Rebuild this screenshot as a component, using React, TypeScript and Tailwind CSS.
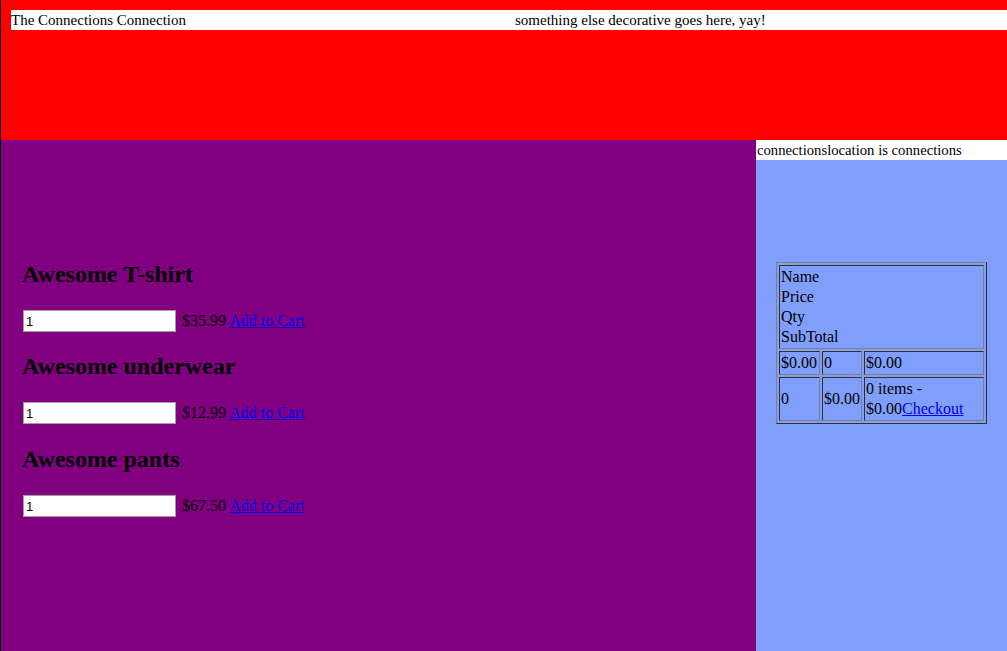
import React from "react";

const products = [
  { name: "Awesome T-shirt", price: "$35.99", gap: "" },
  { name: "Awesome underwear", price: "$12.99", gap: "mt-[19px]" },
  { name: "Awesome pants", price: "$67.50", gap: "mt-[20px]" },
];

const cell =
  "border border-t-[#303030] border-l-[#303030] border-b-[#808080] border-r-[#808080] p-[1px] align-middle text-left font-normal";

export default function App() {
  return (
    <div className="w-[1007px] h-[651px] overflow-hidden flex flex-col border-l border-black font-['Liberation_Serif','Times_New_Roman',serif] text-[16px] leading-[20px] text-black bg-white">
      <header className="h-[140px] shrink-0 bg-[#ff0000] pt-[10px] pl-[10px]">
        <div className="h-[20px] bg-white grid grid-cols-[504px_1fr] whitespace-nowrap text-[15px] leading-[20px]">
          <span>The Connections Connection</span>
          <span>something else decorative goes here, yay!</span>
        </div>
      </header>
      <div className="flex flex-1 min-h-0">
        <main className="w-[755px] shrink-0 bg-[#800080] pl-[21px] pt-[121px]">
          {products.map((p) => (
            <section key={p.name} className={p.gap}>
              <h2 className="text-[24px] font-bold leading-[27px] h-[27px] mb-[20px] whitespace-nowrap">
                {p.name}
              </h2>
              <div className="h-[26px] flex items-center pl-[1px] whitespace-nowrap">
                <input
                  type="text"
                  defaultValue="1"
                  className="w-[153px] h-[22px] border border-[#a0a0a0] bg-white px-[2px] text-[13px] leading-[16px] text-black font-['Liberation_Sans',Arial,sans-serif] outline-none"
                />
                <span className="ml-[6px]">
                  {p.price}{" "}
                  <a href="#" className="text-[#0000ee] underline">
                    Add to Cart
                  </a>
                </span>
              </div>
            </section>
          ))}
        </main>
        <aside className="flex-1 bg-[#809ffa] flex flex-col">
          <div className="h-[20px] bg-white pl-[1px] whitespace-nowrap text-[14.7px] leading-[20px]">
            connectionslocation is connections
          </div>
          <div className="px-[20px] pt-[102px]">
            <table className="w-full table-fixed border-separate border-spacing-[2px] border border-t-[#808080] border-l-[#808080] border-b-[#303030] border-r-[#303030]">
              <colgroup>
                <col className="w-[41px]" />
                <col className="w-[40px]" />
                <col />
              </colgroup>
              <tbody>
                <tr>
                  <td colSpan={3} className={cell}>
                    <div>Name</div>
                    <div>Price</div>
                    <div>Qty</div>
                    <div>SubTotal</div>
                  </td>
                </tr>
                <tr>
                  <td className={cell}>$0.00</td>
                  <td className={cell}>0</td>
                  <td className={cell}>$0.00</td>
                </tr>
                <tr>
                  <td className={cell}>0</td>
                  <td className={cell}>$0.00</td>
                  <td className={cell}>
                    0 items - $0.00
                    <a href="#" className="text-[#0000ee] underline">
                      Checkout
                    </a>
                  </td>
                </tr>
              </tbody>
            </table>
          </div>
        </aside>
      </div>
    </div>
  );
}
